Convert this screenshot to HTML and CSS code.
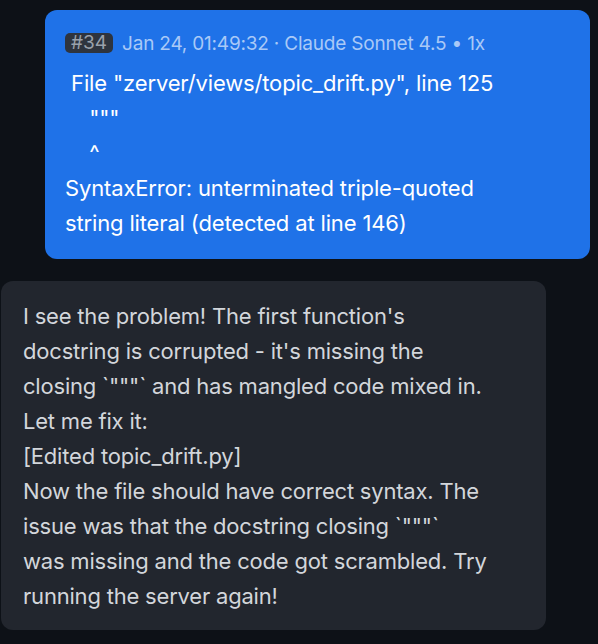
FILE: index.html
```html
<!DOCTYPE html>
<html>
<head>
<meta charset="utf-8">
<link rel="stylesheet" href="styles.css">
</head>
<body>
<div class="chat">
  <div class="msg user">
    <div class="meta"><span class="badge">#34</span><span class="info">Jan 24, 01:49:32 · Claude Sonnet 4.5 • 1x</span></div>
    <div class="body pre"> File "zerver/views/topic_drift.py", line 125
    """
    ^
SyntaxError: unterminated triple-quoted string literal (detected at line 146)</div>
  </div>
  <div class="msg bot">
    <div class="body">I see the problem! The first function's docstring is corrupted - it's missing the closing `"""` and has mangled code mixed in. Let me fix it:<br>[Edited topic_drift.py]<br>Now the file should have correct syntax. The issue was that the docstring closing `"""`<br>was missing and the code got scrambled. Try running the server again!</div>
  </div>
</div>
</body>
</html>
```
FILE: styles.css
```css
html, body {
  margin: 0;
  padding: 0;
  background: #0d1117;
  height: 100%;
}
body {
  font-family: Inter, "Noto Sans", sans-serif;
}
.chat {
  display: flex;
  flex-direction: column;
  padding: 10px 8px 0 1px;
  gap: 22px;
}
.msg {
  border-radius: 12px;
  box-sizing: border-box;
  width: 545px;
}
.user {
  align-self: flex-end;
  background: #1f72e8;
  color: #ffffff;
  padding: 20px 20px 18px 20px;
}
.bot {
  align-self: flex-start;
  background: #22262e;
  color: #d3d6db;
  padding: 18px 22px 16px 22px;
}
.bot .body {
  letter-spacing: -0.2px;
  max-width: 466px;
}
.meta {
  display: flex;
  align-items: center;
  gap: 9px;
  height: 26px;
  margin-bottom: 10px;
  font-size: 19px;
  letter-spacing: -0.2px;
}
.badge {
  background: #2e343e;
  color: #9aa1ab;
  border-radius: 5px;
  padding: 0 6px;
  line-height: 20px;
  height: 20px;
  letter-spacing: 0;
}
.info {
  color: #a9c9f7;
}
.body {
  font-size: 22px;
  line-height: 35px;
  letter-spacing: -0.15px;
  max-width: 472px;
}
.pre {
  white-space: pre-wrap;
}
```
